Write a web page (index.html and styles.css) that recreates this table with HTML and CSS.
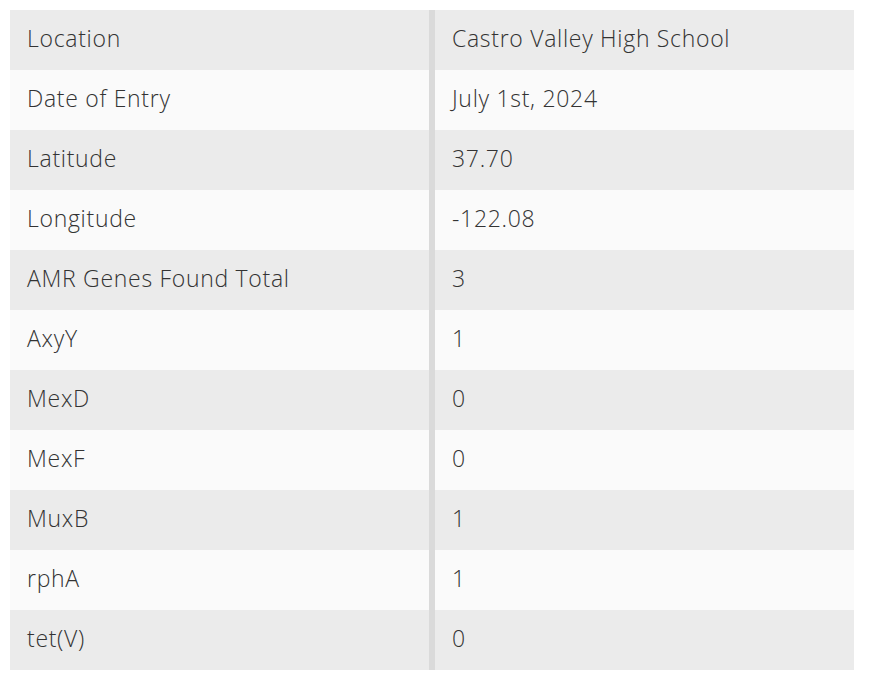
FILE: index.html
```html
<!DOCTYPE html>
<html>
<head>
<meta charset="utf-8">
<link rel="stylesheet" href="styles.css">
</head>
<body>
<table class="data">
<tbody>
<tr><td class="key">Location</td><td class="val">Castro Valley High School</td></tr>
<tr><td class="key">Date of Entry</td><td class="val">July 1st, 2024</td></tr>
<tr><td class="key">Latitude</td><td class="val">37.70</td></tr>
<tr><td class="key">Longitude</td><td class="val">-122.08</td></tr>
<tr><td class="key">AMR Genes Found Total</td><td class="val">3</td></tr>
<tr><td class="key">AxyY</td><td class="val">1</td></tr>
<tr><td class="key">MexD</td><td class="val">0</td></tr>
<tr><td class="key">MexF</td><td class="val">0</td></tr>
<tr><td class="key">MuxB</td><td class="val">1</td></tr>
<tr><td class="key">rphA</td><td class="val">1</td></tr>
<tr><td class="key">tet(V)</td><td class="val">0</td></tr>
</tbody>
</table>
</body>
</html>
```
FILE: styles.css
```css
html, body { margin: 0; padding: 0; background: #fff; }
body { padding: 10px; }
.data {
  border-collapse: collapse;
  width: 844px;
  font-family: "Open Sans", Lato, sans-serif;
  font-weight: 300;
  font-size: 23px;
  letter-spacing: 0.7px;
  color: #333;
}
.data tr { height: 60px; }
.data tr:nth-child(odd) { background: #ebebeb; }
.data tr:nth-child(even) { background: #fafafa; }
.data td { padding: 0 17px 5px; vertical-align: middle; }
.data .key { width: 385px; border-right: 6px solid #dadada; }
```
